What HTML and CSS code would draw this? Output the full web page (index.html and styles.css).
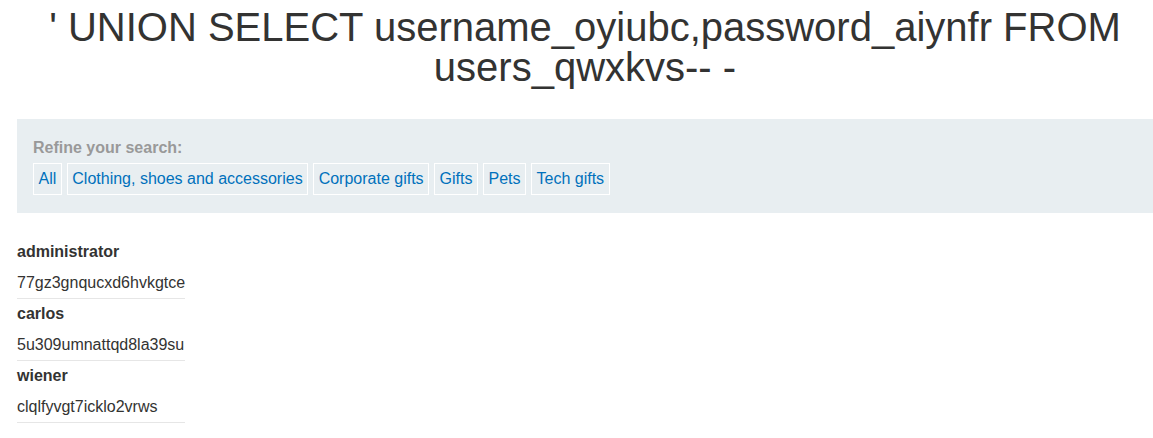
FILE: index.html
```html
<!DOCTYPE html>
<html>
<head>
<meta charset="utf-8">
<link rel="stylesheet" href="styles.css">
</head>
<body>
<div class="page">
  <h1 class="title">' UNION SELECT username_oyiubc,password_aiynfr FROM users_qwxkvs-- -</h1>
  <section class="filter">
    <div class="filter-label">Refine your search:</div>
    <div class="filter-links">
      <a class="filter-link" href="#">All</a>
      <a class="filter-link" href="#">Clothing, shoes and accessories</a>
      <a class="filter-link" href="#">Corporate gifts</a>
      <a class="filter-link" href="#">Gifts</a>
      <a class="filter-link" href="#">Pets</a>
      <a class="filter-link" href="#">Tech gifts</a>
    </div>
  </section>
  <table class="results">
    <tbody>
      <tr><th>administrator</th></tr>
      <tr><td>77gz3gnqucxd6hvkgtce</td></tr>
      <tr><th>carlos</th></tr>
      <tr><td>5u309umnattqd8la39su</td></tr>
      <tr><th>wiener</th></tr>
      <tr><td>clqlfyvgt7icklo2vrws</td></tr>
    </tbody>
  </table>
</div>
</body>
</html>
```
FILE: styles.css
```css
html, body {
  margin: 0;
  padding: 0;
  background: #fff;
}
body {
  font-family: "Liberation Sans", Arial, sans-serif;
  color: #333332;
  font-size: 16px;
}
.page {
  padding: 0 0 0 17px;
}
.title {
  margin: 7px 0 0 0;
  font-size: 40px;
  font-weight: normal;
  line-height: 40px;
  text-align: center;
  color: #333332;
}
.filter {
  margin-top: 32px;
  background: #e8eef1;
  padding: 19px 16px 18px;
}
.filter-label {
  color: #999;
  font-weight: bold;
  line-height: 20px;
  margin-bottom: 5px;
}
.filter-links {
  display: flex;
  gap: 5px;
}
.filter-link {
  color: #0071bc;
  text-decoration: none;
  border: 1px solid #fff;
  padding: 5px 4.5px;
  line-height: 20px;
}
.results {
  margin-top: 24px;
  border-collapse: collapse;
  border-spacing: 0;
}
.results th,
.results td {
  text-align: left;
  padding: 5px 0;
  font-size: 16px;
}
.results th {
  font-weight: bold;
  line-height: 20px;
}
.results td {
  line-height: 21px;
  border-bottom: 1px solid #e6e6e6;
}
```
